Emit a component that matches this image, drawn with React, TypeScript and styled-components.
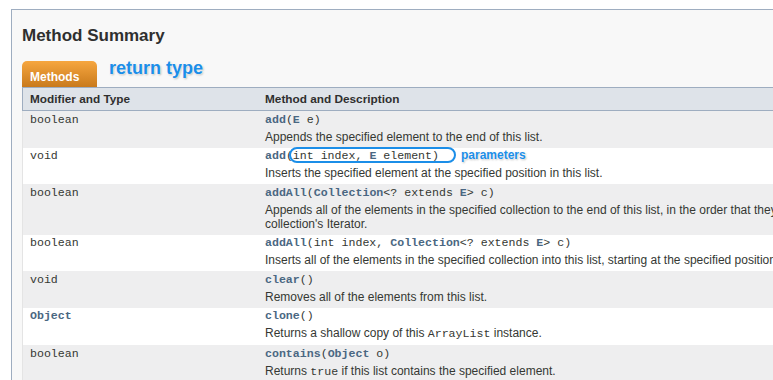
import React from 'react';
import styled, { createGlobalStyle } from 'styled-components';

const GlobalStyle = createGlobalStyle`
    body {
        margin: 0;
        background: #ffffff;
        overflow: hidden;
        font-family: 'Liberation Sans', Arial, sans-serif;
        color: #353833;
    }
`;

const Frame = styled.div`
    margin: 9px 0 0 11px;
    width: 1000px;
    min-height: 420px;
    box-sizing: border-box;
    border: 1px solid #9eadc0;
    background: #f8f8f8;
    padding: 16px 0 5px 10px;
`;
const Heading = styled.h3`
    margin: 0;
    font-size: 17px;
    line-height: 20px;
    font-weight: bold;
    color: #2f2f2f;
`;
const TabRow = styled.div`
    display: flex;
    align-items: flex-start;
    margin-top: 15px;
    height: 26px;
`;
const Tab = styled.div`
    width: 75px;
    height: 26px;
    box-sizing: border-box;
    padding: 9px 0 0 8px;
    border-radius: 5px 5px 0 0;
    background: linear-gradient(#f6a63f, #c97a1c);
    color: #ffffff;
    font-size: 12px;
    line-height: 14px;
    font-weight: bold;
`;
const Callout = styled.span<{ size: number }>`
    font-size: ${({ size }) => size}px;
    line-height: ${({ size }) => size}px;
    font-weight: bold;
    color: #1b8ee8;
    white-space: nowrap;
    text-shadow: 0 0 2px #ffffff, 0 0 2px #ffffff, 1px 1px 2px rgba(0, 0, 0, 0.3);
    font-family: 'Liberation Sans', Arial, sans-serif;
`;
const TypeCallout = styled(Callout)`
    margin: -2px 0 0 12px;
`;
const ParamCallout = styled(Callout)`
    margin-left: 22px;
    vertical-align: top;
`;
const Table = styled.table`
    width: 943px;
    table-layout: fixed;
    border-collapse: collapse;
    border-left: 1px solid #e4e4e4;
`;
const Head = styled.th<{ first?: boolean }>`
    width: ${({ first }) => (first ? '225px' : 'auto')};
    background: #dee3e9;
    border-top: 1px solid #9eadc0;
    border-bottom: 1px solid #9eadc0;
    ${({ first }) => (first ? 'border-left: 1px solid #9eadc0;' : '')}
    text-align: left;
    padding: 3px 3px 3px 7px;
    font-size: 11.8px;
    line-height: 16px;
    font-weight: bold;
    color: #2f2f2f;
`;
const Row = styled.tr<{ alt: boolean }>`
    background: ${({ alt }) => (alt ? '#eeeeef' : '#ffffff')};
`;
const Cell = styled.td`
    vertical-align: top;
    padding: 1.5px 3px 4px 7px;
`;
const Code = styled.div`
    font-family: 'Liberation Mono', 'Courier New', monospace;
    font-size: 11.6px;
    line-height: 14px;
    white-space: nowrap;
`;
const Link = styled.span`
    font-weight: bold;
    color: #4a6782;
`;
const Circled = styled.span`
    position: relative;
    &::before {
        content: '';
        position: absolute;
        top: -2px;
        bottom: -1px;
        left: 3px;
        right: -17px;
        border: 2px solid #1b8ee8;
        border-radius: 9px;
    }
`;
const Desc = styled.div`
    margin-top: 3px;
    font-size: 12px;
    line-height: 14px;
`;
const Inline = styled.code`
    font-family: 'Liberation Mono', 'Courier New', monospace;
    font-size: 11.6px;
`;

type Method = {
    type: React.ReactNode;
    sig: React.ReactNode;
    desc: React.ReactNode;
};

const methods: Method[] = [
    {
        type: 'boolean',
        sig: (
            <>
                <Link>add</Link>(<Link>E</Link> e)
            </>
        ),
        desc: 'Appends the specified element to the end of this list.',
    },
    {
        type: 'void',
        sig: (
            <>
                <Link>add</Link>
                <Circled>
                    (int index, <Link>E</Link> element)
                </Circled>
                <ParamCallout size={12}>parameters</ParamCallout>
            </>
        ),
        desc: 'Inserts the specified element at the specified position in this list.',
    },
    {
        type: 'boolean',
        sig: (
            <>
                <Link>addAll</Link>(<Link>Collection</Link>&lt;? extends <Link>E</Link>&gt; c)
            </>
        ),
        desc: "Appends all of the elements in the specified collection to the end of this list, in the order that they are returned by the specified collection's Iterator.",
    },
    {
        type: 'boolean',
        sig: (
            <>
                <Link>addAll</Link>(int index, <Link>Collection</Link>&lt;? extends <Link>E</Link>&gt; c)
            </>
        ),
        desc: 'Inserts all of the elements in the specified collection into this list, starting at the specified position.',
    },
    {
        type: 'void',
        sig: (
            <>
                <Link>clear</Link>()
            </>
        ),
        desc: 'Removes all of the elements from this list.',
    },
    {
        type: <Link>Object</Link>,
        sig: (
            <>
                <Link>clone</Link>()
            </>
        ),
        desc: (
            <>
                Returns a shallow copy of this <Inline>ArrayList</Inline> instance.
            </>
        ),
    },
    {
        type: 'boolean',
        sig: (
            <>
                <Link>contains</Link>(<Link>Object</Link> o)
            </>
        ),
        desc: (
            <>
                Returns <Inline>true</Inline> if this list contains the specified element.
            </>
        ),
    },
];

export default function App() {
    return (
        <>
            <GlobalStyle />
            <Frame>
                <Heading>Method Summary</Heading>
                <TabRow>
                    <Tab>Methods</Tab>
                    <TypeCallout size={18}>return type</TypeCallout>
                </TabRow>
                <Table>
                    <thead>
                        <tr>
                            <Head first>Modifier and Type</Head>
                            <Head>Method and Description</Head>
                        </tr>
                    </thead>
                    <tbody>
                        {methods.map((m, i) => (
                            <Row key={i} alt={i % 2 === 0}>
                                <Cell>
                                    <Code>{m.type}</Code>
                                </Cell>
                                <Cell>
                                    <Code>{m.sig}</Code>
                                    <Desc>{m.desc}</Desc>
                                </Cell>
                            </Row>
                        ))}
                    </tbody>
                </Table>
            </Frame>
        </>
    );
}
